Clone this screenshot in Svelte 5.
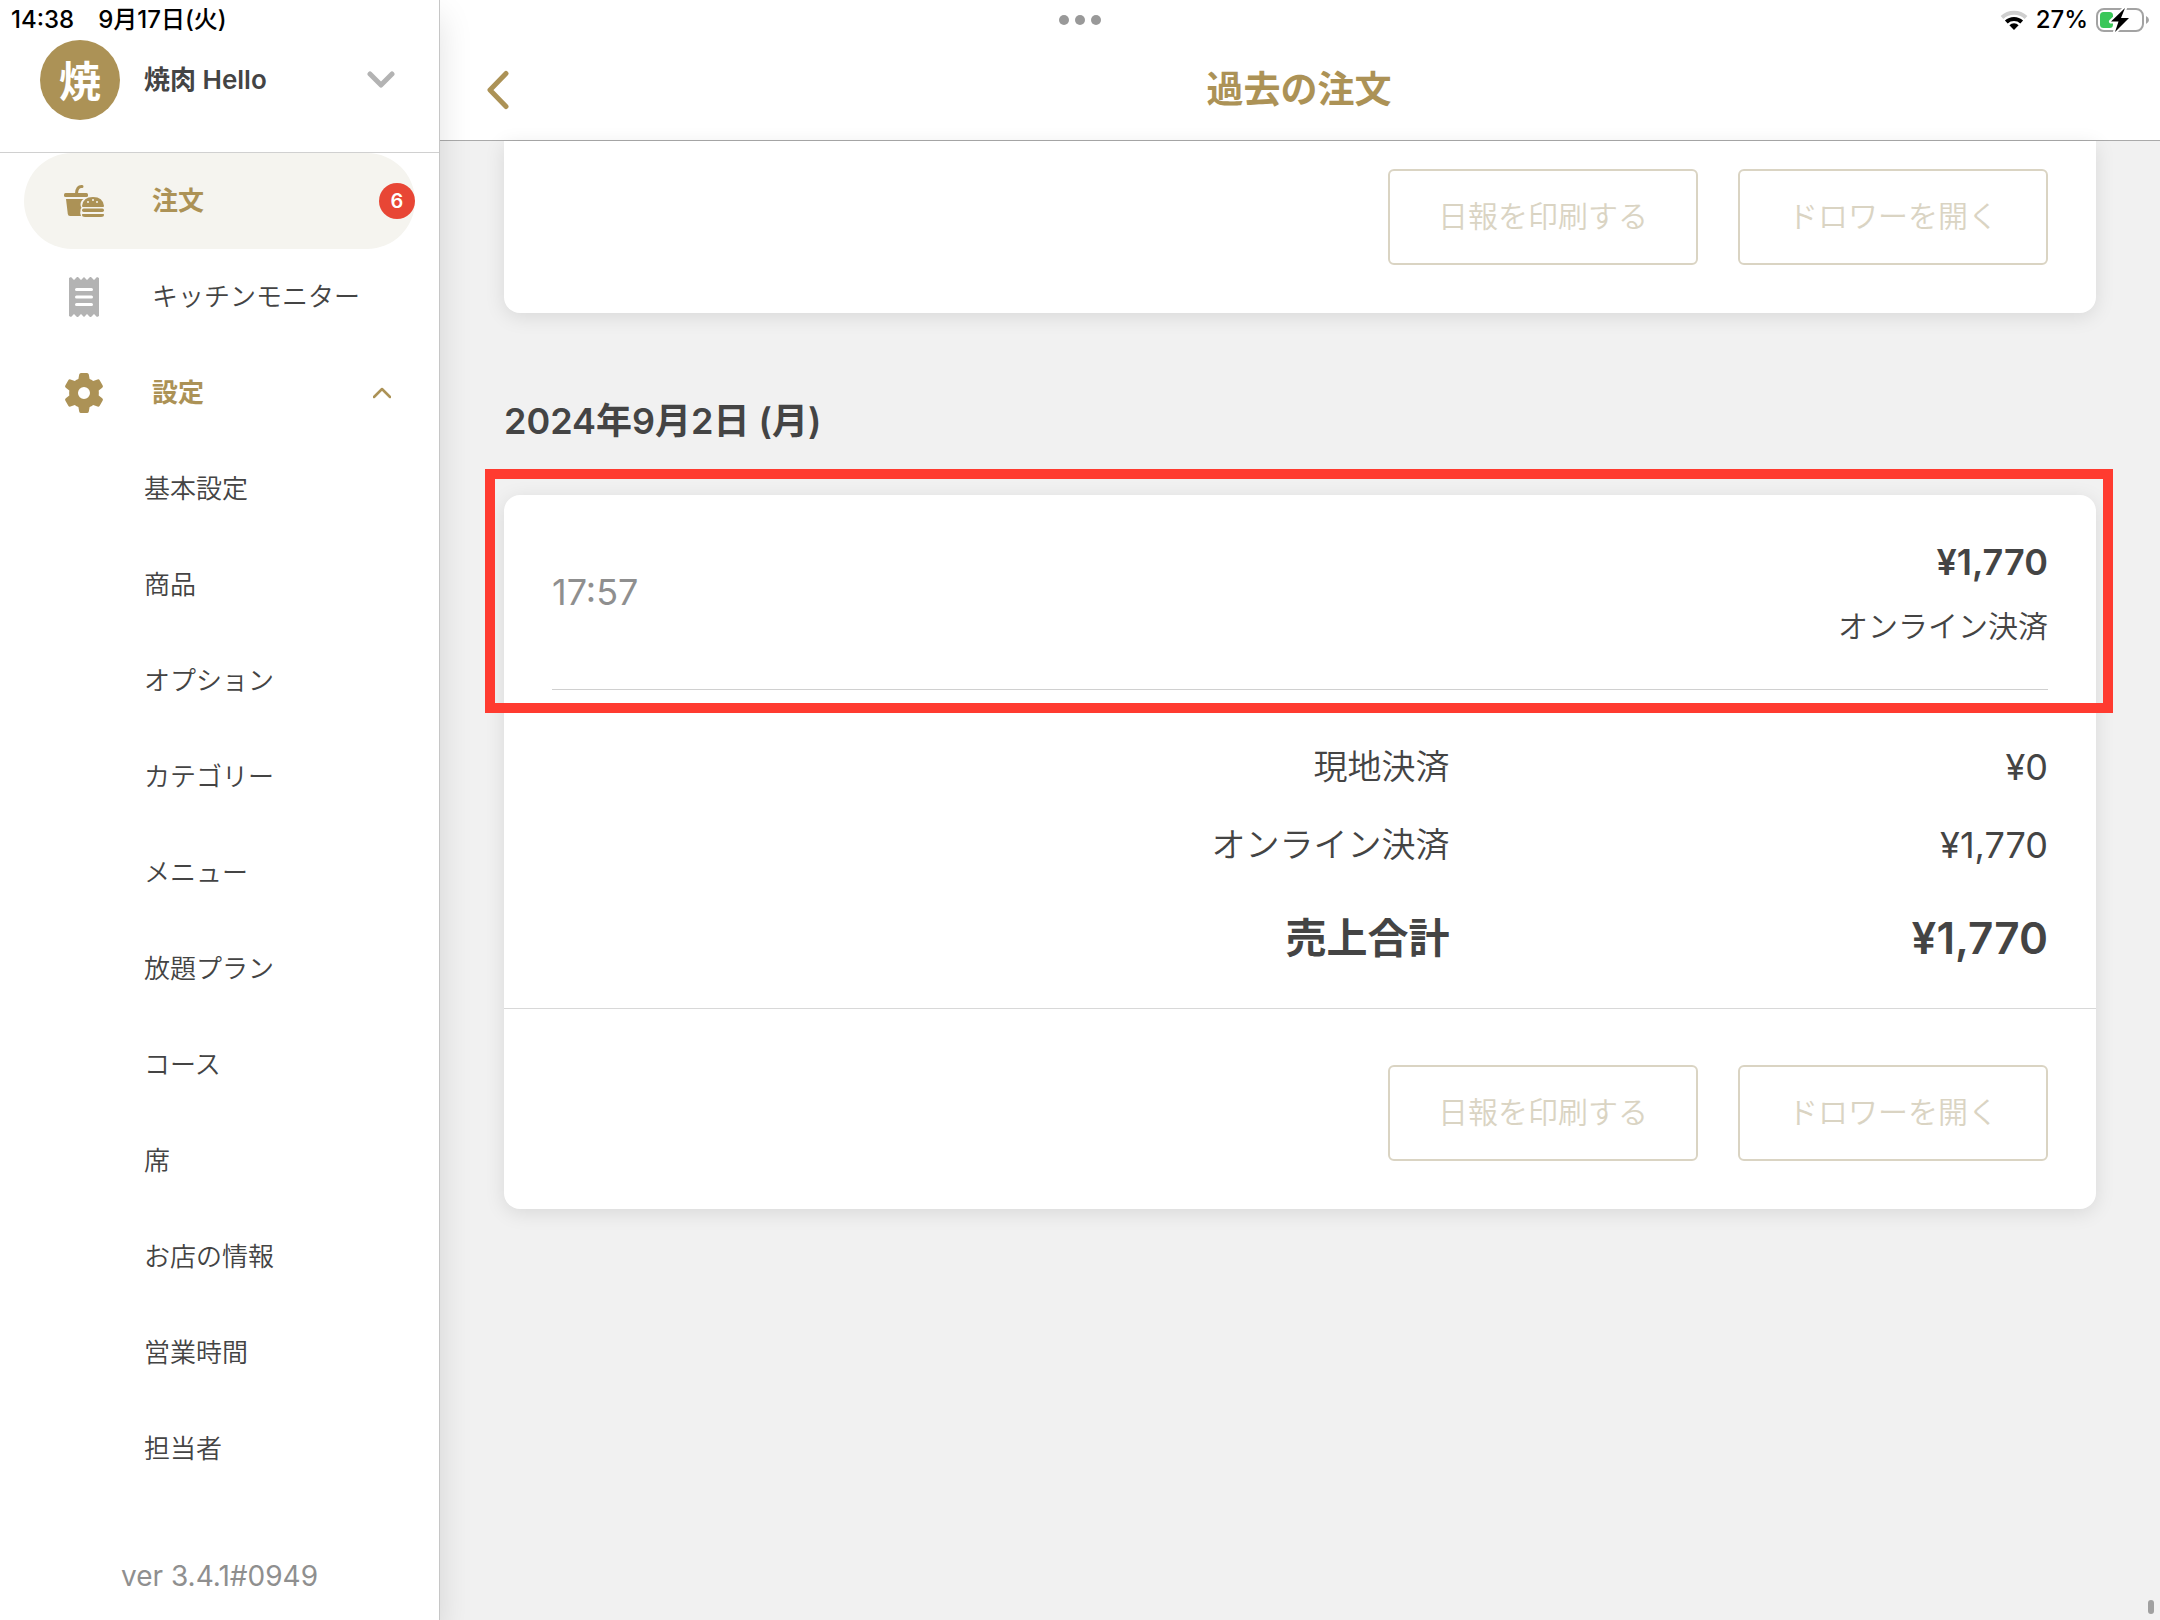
<script>
	let settingsOpen = true;

	const settings = [
		"基本設定",
		"商品",
		"オプション",
		"カテゴリー",
		"メニュー",
		"放題プラン",
		"コース",
		"席",
		"お店の情報",
		"営業時間",
		"担当者"
	];

	const totals = [
		{ label: "現地決済", amount: 0 },
		{ label: "オンライン決済", amount: 1770 }
	];
	const sum = totals.reduce((acc, row) => acc + row.amount, 0);

	function yen(value) {
		return "¥" + value.toLocaleString("en-US");
	}
</script>

<div class="app">
	<div class="status">
		<div class="clock">
			<span>14:38</span>
			<span>9月17日(火)</span>
		</div>
		<div class="dots"><i></i><i></i><i></i></div>
		<div class="device">
			<svg class="wifi" width="28" height="20" viewBox="0 0 28 20">
				<path d="M2 7.5a17.5 17.5 0 0 1 24 0" fill="none" stroke="#cfcfcf" stroke-width="4" />
				<path d="M6.3 12a11.3 11.3 0 0 1 15.4 0" fill="none" stroke="#000" stroke-width="4" />
				<path d="M14 20l-4.6-4.8a6.5 6.5 0 0 1 9.2 0z" fill="#000" />
			</svg>
			<span>27%</span>
			<svg width="53" height="26" viewBox="0 0 53 26">
				<rect x="1" y="2" width="46" height="22" rx="7" fill="#fff" stroke="#a3a3a3" stroke-width="2" />
				<path d="M50 9q3 1.500 3 4t-3 4z" fill="#a3a3a3" />
				<rect x="4" y="5" width="13" height="16" rx="3.500" fill="#3ac759" />
				<path d="M29 1L15 14.500h7.500L19 25l14-14h-8z" fill="#000" stroke="#fff" stroke-width="4" paint-order="stroke" stroke-linejoin="round" />
			</svg>
		</div>
	</div>

	<aside class="sidebar">
		<button class="shop">
			<span class="avatar">焼</span>
			<span class="shop-name">焼肉 Hello</span>
			<svg width="28" height="18" viewBox="0 0 28 18">
				<path d="M3 3l11 11L25 3" fill="none" stroke="#b3b3b3" stroke-width="5" stroke-linecap="round" stroke-linejoin="round" />
			</svg>
		</button>

		<nav>
			<a class="item active" href="#orders">
				<svg width="40" height="40" viewBox="0 -3 40 40" fill="#ac9256">
					<path d="M12.500 9.500Q13 2 18 2.500" fill="none" stroke="#ac9256" stroke-width="3" stroke-linecap="round" />
					<rect x="0" y="9" width="24" height="4" rx="1.500" />
					<path d="M2 15h17.500q-3 2-3 5.500 0 2 1 3-1.500 2-1 3.500-1 2 .5 5H6q-2 0-2.200-2z" />
					<path d="M18 22q1-9 11-9t11 9q0 1-1 1H19q-1 0-1-1z" />
					<rect x="18" y="24.500" width="22" height="3.500" rx="1.700" />
					<path d="M18.500 30h21q.5 0 .5.800 0 2.200-3 2.200H21q-3 0-3-2.200 0-.8.5-.8z" />
					<g fill="#f5f4ef">
						<circle cx="24" cy="18" r="1" />
						<circle cx="29" cy="16" r="1" />
						<circle cx="33" cy="18" r="1" />
					</g>
				</svg>
				<span class="label">注文</span>
				<span class="badge">6</span>
			</a>
			<a class="item" href="#kitchen">
				<svg width="40" height="40" viewBox="0 0 40 40">
					<path d="M5 1l2-1 3 3 3-3h1l3 3 3-3 3 3 3-3h1l3 3 3-3 2 1v38l-2 1-3-3-3 3h-1l-3-3-3 3-3-3-3 3h-1l-3-3-3 3-2-1z" fill="#b3b3b3" />
					<path d="M12.500 12.500h15M12.500 20h15M12.500 27.500h15" stroke="#fff" stroke-width="3" stroke-linecap="round" />
				</svg>
				<span class="label">キッチンモニター</span>
			</a>
			<button class="item open" aria-expanded={settingsOpen} on:click={() => (settingsOpen = !settingsOpen)}>
				<svg width="40" height="40" viewBox="0 0 40 40">
					<path
						fill="#ac9256"
						fill-rule="evenodd"
						d="M17 0h6q1.500 0 1.800 1.500l.8 4.500q1.800.7 3.600 2l4.300-1.600q1.400-.5 2.200.8l3 5.200q.7 1.300-.5 2.300l-3.500 2.900q.3 2.400 0 4.800l3.500 2.900q1.200 1 .5 2.300l-3 5.200q-.8 1.300-2.200.8L29.200 32q-1.800 1.300-3.600 2l-.8 4.500Q24.500 40 23 40h-6q-1.500 0-1.800-1.500l-.8-4.500q-1.800-.7-3.600-2l-4.300 1.600q-1.400.5-2.200-.8l-3-5.200q-.7-1.300.5-2.300l3.500-2.900q-.3-2.400 0-4.800l-3.500-2.900q-1.200-1-.5-2.300l3-5.200q.8-1.300 2.200-.8L10.800 8q1.800-1.300 3.600-2l.8-4.500Q15.500 0 17 0zM20 14a6 6 0 1 0 0 12 6 6 0 0 0 0-12z"
					/>
				</svg>
				<span class="label">設定</span>
				<svg class="caret" width="18" height="12" viewBox="0 0 18 12">
					<path d="M1 10l8-8 8 8" fill="none" stroke="#ac9256" stroke-width="2.500" stroke-linecap="round" stroke-linejoin="round" />
				</svg>
			</button>
			{#if settingsOpen}
				{#each settings as name}
					<a class="item sub" href="#settings">{name}</a>
				{/each}
			{/if}
		</nav>

		<p class="version">ver 3.4.1#0949</p>
	</aside>

	<main>
		<header>
			<button class="back" aria-label="戻る">
				<svg width="24" height="40" viewBox="0 0 24 40">
					<path d="M20 3.500L4 20l16 16.500" fill="none" stroke="#ac9256" stroke-width="5" stroke-linecap="round" stroke-linejoin="round" />
				</svg>
			</button>
			<h1>過去の注文</h1>
		</header>

		<div class="content">
			<section class="card previous">
				<div class="actions">
					<button disabled>日報を印刷する</button>
					<button disabled>ドロワーを開く</button>
				</div>
			</section>

			<h2>2024年9月2日 (月)</h2>

			<section class="card">
				<div class="order">
					<time>17:57</time>
					<div class="payment">
						<strong>{yen(1770)}</strong>
						<span>オンライン決済</span>
					</div>
					<div class="highlight"></div>
				</div>
				<table>
					<tbody>
						{#each totals as row}
							<tr>
								<th>{row.label}</th>
								<td>{yen(row.amount)}</td>
							</tr>
						{/each}
						<tr class="sum">
							<th>売上合計</th>
							<td>{yen(sum)}</td>
						</tr>
					</tbody>
				</table>
				<div class="actions bordered">
					<button disabled>日報を印刷する</button>
					<button disabled>ドロワーを開く</button>
				</div>
			</section>
		</div>
		<div class="scroll-thumb"></div>
	</main>
</div>

<style>
	:global(body) {
		margin: 0;
		background: #f1f1f1;
	}

	.app {
		position: relative;
		display: flex;
		min-height: 100vh;
		overflow: hidden;
		color: #444;
		font-family: Inter, "Noto Sans CJK JP", sans-serif;
		font-size: 26px;
		font-weight: 400;
	}
	.app * {
		box-sizing: border-box;
	}
	button {
		margin: 0;
		padding: 0;
		border: 0;
		background: none;
		color: inherit;
		font: inherit;
		text-align: left;
	}
	a {
		color: inherit;
		text-decoration: none;
	}
	svg {
		flex: none;
	}

	/* status bar */
	.status {
		position: absolute;
		top: 0;
		left: 0;
		right: 0;
		z-index: 3;
		display: grid;
		grid-template-columns: 1fr auto 1fr;
		align-items: center;
		height: 40px;
		padding: 0 11px;
		color: #000;
		font-size: 24px;
		font-weight: 500;
		line-height: 40px;
	}
	.clock {
		display: flex;
		gap: 24px;
	}
	.dots {
		display: flex;
		gap: 6px;
	}
	.dots i {
		width: 10px;
		height: 10px;
		border-radius: 50%;
		background: #999;
	}
	.device {
		display: flex;
		justify-content: flex-end;
		align-items: center;
		gap: 8px;
	}

	/* sidebar */
	.sidebar {
		position: relative;
		z-index: 2;
		display: flex;
		flex-direction: column;
		flex: none;
		width: 440px;
		border-right: 1px solid #c6c6c6;
		background: #fff;
		box-shadow: 0 16px 32px rgba(0, 0, 0, 0.12);
	}
	.shop {
		display: flex;
		align-items: center;
		height: 153px;
		padding: 40px 44px 32px 40px;
		border-bottom: 1px solid #d0d0d0;
		font-weight: 600;
	}
	.shop svg {
		margin-left: auto;
	}
	.avatar {
		display: flex;
		align-items: center;
		justify-content: center;
		width: 80px;
		height: 80px;
		margin-right: 24px;
		padding-bottom: 4px;
		border-radius: 50%;
		background: #ac9256;
		color: #fff;
		font-size: 42px;
	}
	.shop-name,
	.label,
	.sub {
		padding-bottom: 6px;
	}
	.item {
		display: flex;
		align-items: center;
		width: 391px;
		height: 96px;
		margin-left: 24px;
		padding-left: 40px;
		font-weight: 350;
	}
	.label {
		margin-left: 48px;
	}
	.active {
		border-radius: 48px;
		background: #f5f4ef;
	}
	.active,
	.open {
		color: #ac9256;
		font-weight: 600;
	}
	.badge {
		width: 36px;
		height: 36px;
		margin-left: auto;
		border-radius: 50%;
		background: #e84635;
		color: #fff;
		font-size: 20px;
		line-height: 36px;
		text-align: center;
	}
	.caret {
		margin-left: auto;
		margin-right: 24px;
	}
	.sub {
		padding-left: 120px;
	}
	.version {
		margin: auto 0 0;
		padding-bottom: 24px;
		color: #8f8f8f;
		font-size: 28px;
		line-height: 40px;
		text-align: center;
	}

	/* main column */
	main {
		position: relative;
		flex: 1;
		min-width: 0;
	}
	header {
		display: grid;
		grid-template-columns: 1fr auto 1fr;
		align-items: center;
		height: 141px;
		padding: 40px 48px 0 46px;
		border-bottom: 1px solid #aaa;
		background: #fff;
	}
	.back svg {
		display: block;
	}
	h1 {
		margin: 0;
		color: #ac9256;
		font-size: 37px;
		font-weight: 600;
		line-height: 48px;
	}
	.content {
		padding: 0 64px 80px;
	}
	h2 {
		margin: 80px 0 46px;
		font-size: 36px;
		font-weight: 600;
		line-height: 56px;
	}
	.card {
		border-radius: 16px;
		background: #fff;
		box-shadow: 0 4px 20px rgba(0, 0, 0, 0.1);
	}
	.previous {
		border-radius: 0 0 16px 16px;
	}
	.actions {
		display: flex;
		justify-content: flex-end;
		gap: 40px;
		padding: 28px 48px 48px;
	}
	.actions.bordered {
		padding-top: 56px;
		border-top: 1px solid #d8d8d8;
	}
	.actions button {
		width: 310px;
		height: 96px;
		padding-bottom: 6px;
		border: 2px solid #dad4c3;
		border-radius: 6px;
		color: #dad4c3;
		font-size: 30px;
		font-weight: 350;
		text-align: center;
	}
	.order {
		position: relative;
		display: flex;
		align-items: center;
		justify-content: space-between;
		height: 195px;
		margin: 0 48px;
		border-bottom: 1px solid #d0d0d0;
	}
	.order time {
		color: #8f8f8f;
		font-size: 36px;
	}
	.payment {
		display: flex;
		flex-direction: column;
		gap: 16px;
		padding-top: 4px;
		text-align: right;
		line-height: 48px;
	}
	.payment strong {
		font-size: 36px;
		font-weight: 600;
	}
	.payment span {
		font-size: 30px;
		font-weight: 350;
	}
	/* frame drawn around the order row, past the card edges */
	.highlight {
		position: absolute;
		inset: -26px -65px -24px -67px;
		border: 10px solid #ff3b30;
		pointer-events: none;
	}
	table {
		width: 100%;
		padding: 38px 48px 16px;
		border-spacing: 0;
		table-layout: fixed;
	}
	th,
	td {
		height: 78px;
		padding: 0;
		line-height: 48px;
		text-align: right;
	}
	th {
		width: 60%;
		font-size: 34px;
		font-weight: 350;
	}
	td {
		font-size: 36px;
	}
	.sum th,
	.sum td {
		height: 108px;
		font-weight: 600;
	}
	.sum th {
		font-size: 41px;
	}
	.sum td {
		font-size: 44px;
	}
	.scroll-thumb {
		position: absolute;
		right: 6px;
		bottom: 6px;
		width: 6px;
		height: 14px;
		border-radius: 3px;
		background: #a0a0a0;
	}
</style>
